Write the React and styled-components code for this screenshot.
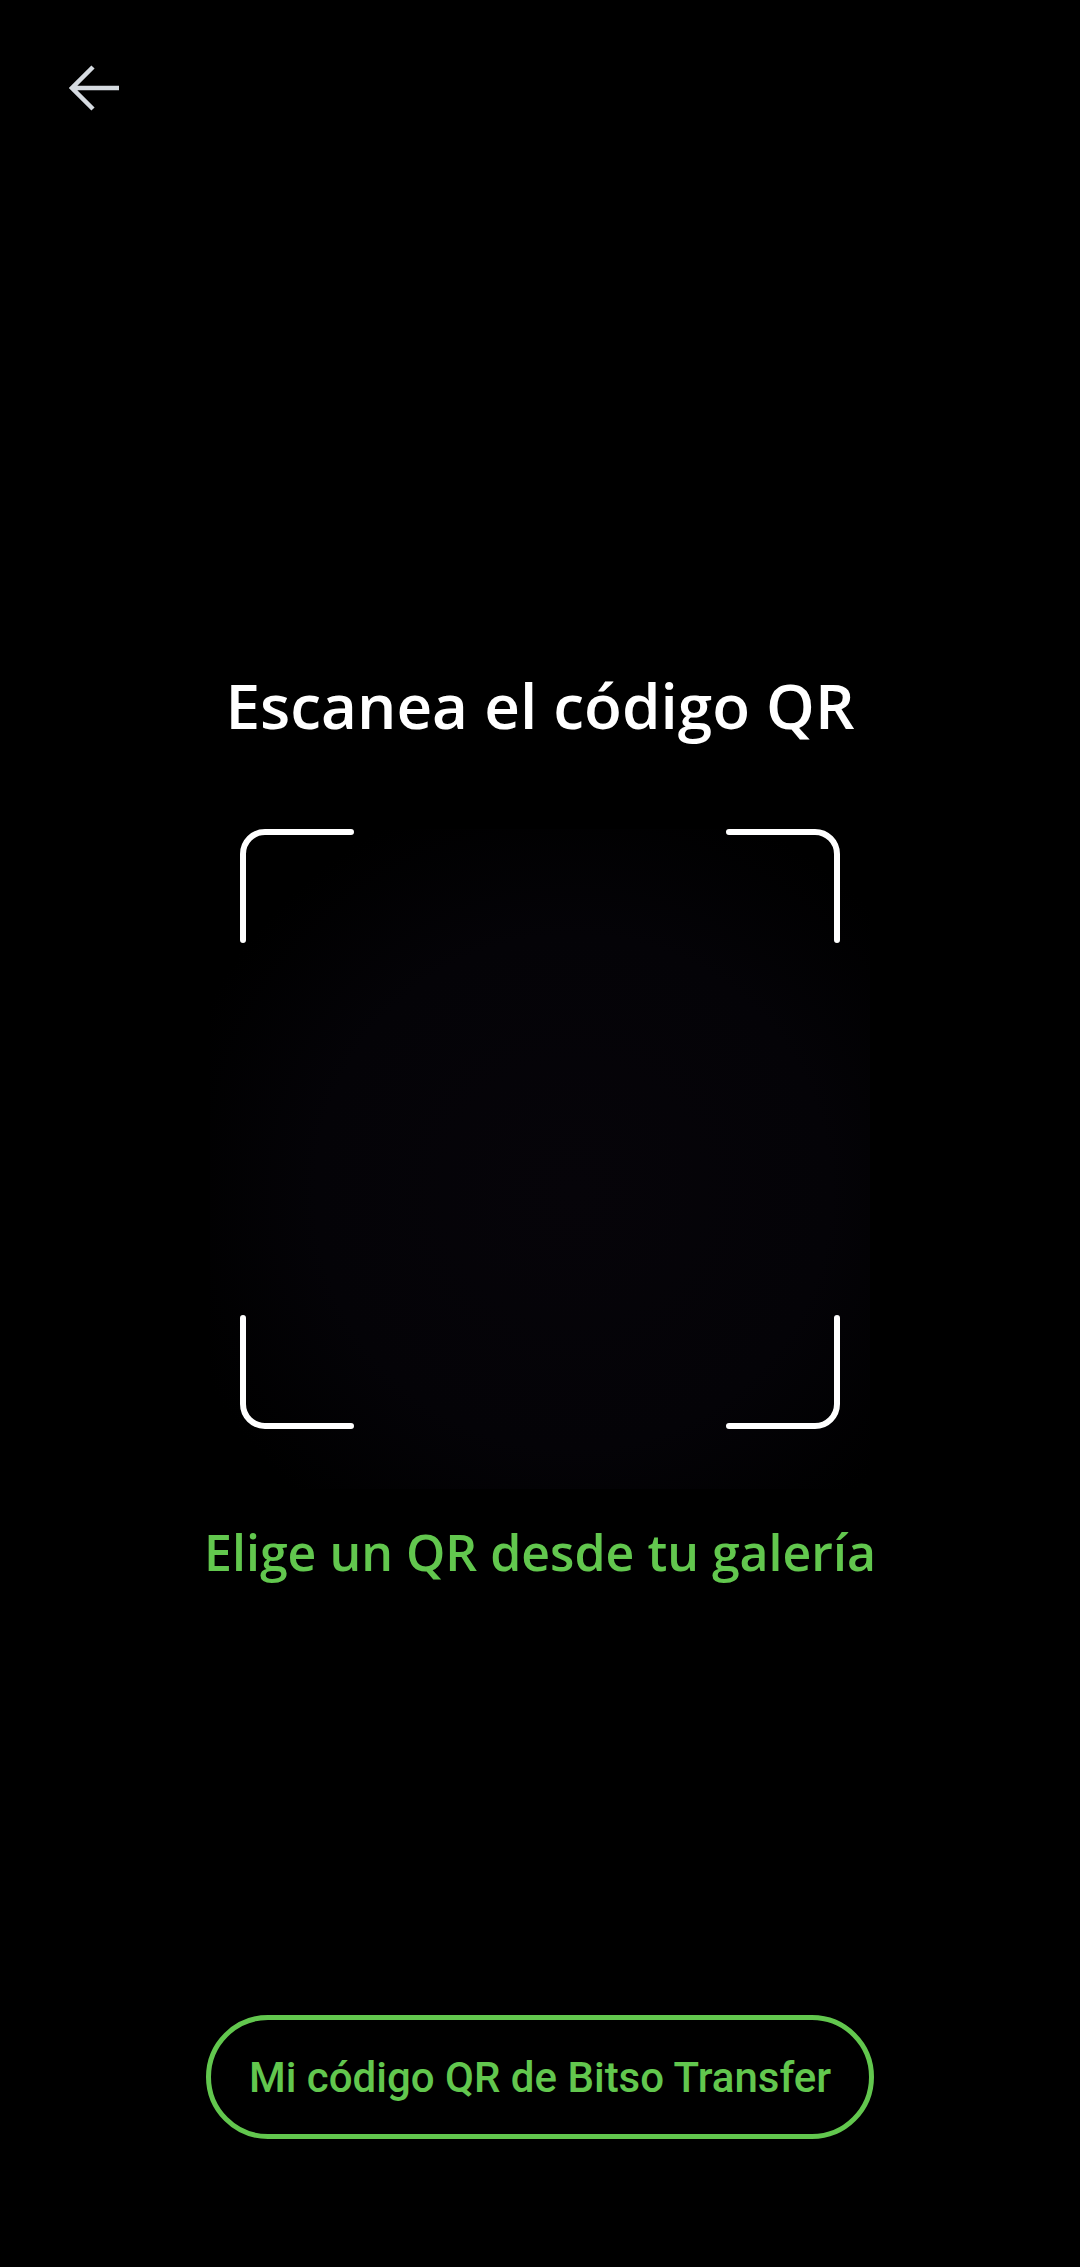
import React from 'react'
import styled, { createGlobalStyle } from 'styled-components'

const GlobalStyle = createGlobalStyle`
  html, body {
    margin: 0;
    padding: 0;
    background: #000;
  }
  * {
    box-sizing: border-box;
  }
`

const Screen = styled.div`
  width: 1080px;
  height: 2267px;
  background: #000;
  display: flex;
  flex-direction: column;
  align-items: center;
  overflow: hidden;
`

const TopBar = styled.div`
  width: 100%;
  height: 176px;
  display: flex;
  align-items: center;
  padding-left: 64px;
`

const BackButton = styled.button`
  width: 62px;
  height: 62px;
  padding: 0;
  border: none;
  background: transparent;
  display: flex;
  align-items: center;
  justify-content: center;
  color: #d6dbe1;
  cursor: pointer;
`

const Title = styled.h1`
  margin: 494px 0 0;
  font-family: 'Open Sans', 'Noto Sans', sans-serif;
  font-weight: 600;
  font-size: 62px;
  line-height: 70px;
  color: #fff;
  text-align: center;
`

const Scanner = styled.div`
  position: relative;
  margin-top: 89px;
  width: 660px;
  height: 660px;
  display: flex;
  align-items: center;
  justify-content: center;
`

const Preview = styled.div`
  width: 100%;
  height: 100%;
  background: radial-gradient(
    ellipse at 55% 55%,
    #060409 0%,
    #040307 50%,
    #000 80%
  );
`

const Frame = styled.svg`
  position: absolute;
  top: 0;
  left: 30px;
  width: 600px;
  height: 600px;
`

const GalleryLink = styled.a`
  margin-top: 33px;
  font-family: 'Open Sans', 'Noto Sans', sans-serif;
  font-weight: 600;
  font-size: 50px;
  line-height: 60px;
  color: #62c74e;
  text-decoration: none;
  text-align: center;
`

const Spacer = styled.div`
  flex: 1;
`

const OutlineButton = styled.button`
  margin-bottom: 128px;
  width: 668px;
  height: 124px;
  border: 5px solid #62c74e;
  border-radius: 62px;
  background: transparent;
  color: #62c74e;
  font-family: Roboto, 'Liberation Sans', sans-serif;
  font-weight: 500;
  font-size: 42px;
  display: flex;
  align-items: center;
  justify-content: center;
  cursor: pointer;
`

const ArrowLeft = () => (
  <svg width="52" height="46" viewBox="0 0 52 46" fill="none">
    <path
      d="M50 23H3M24 2L3 23l21 21"
      stroke="currentColor"
      strokeWidth="4.5"
      strokeLinecap="butt"
      strokeLinejoin="miter"
    />
  </svg>
)

const corners = [
  'M3 111V25A22 22 0 0 1 25 3H111',
  'M489 3H575A22 22 0 0 1 597 25V111',
  'M3 489V575A22 22 0 0 0 25 597H111',
  'M489 597H575A22 22 0 0 0 597 575V489',
]

export default function App() {
  return (
    <>
      <GlobalStyle />
      <Screen>
        <TopBar>
          <BackButton aria-label="Volver">
            <ArrowLeft />
          </BackButton>
        </TopBar>
        <Title>Escanea el código QR</Title>
        <Scanner>
          <Preview />
          <Frame viewBox="0 0 600 600" fill="none">
            {corners.map((d) => (
              <path
                key={d}
                d={d}
                stroke="#fff"
                strokeWidth="6"
                strokeLinecap="round"
              />
            ))}
          </Frame>
        </Scanner>
        <GalleryLink href="#">Elige un QR desde tu galería</GalleryLink>
        <Spacer />
        <OutlineButton>Mi código QR de Bitso Transfer</OutlineButton>
      </Screen>
    </>
  )
}
